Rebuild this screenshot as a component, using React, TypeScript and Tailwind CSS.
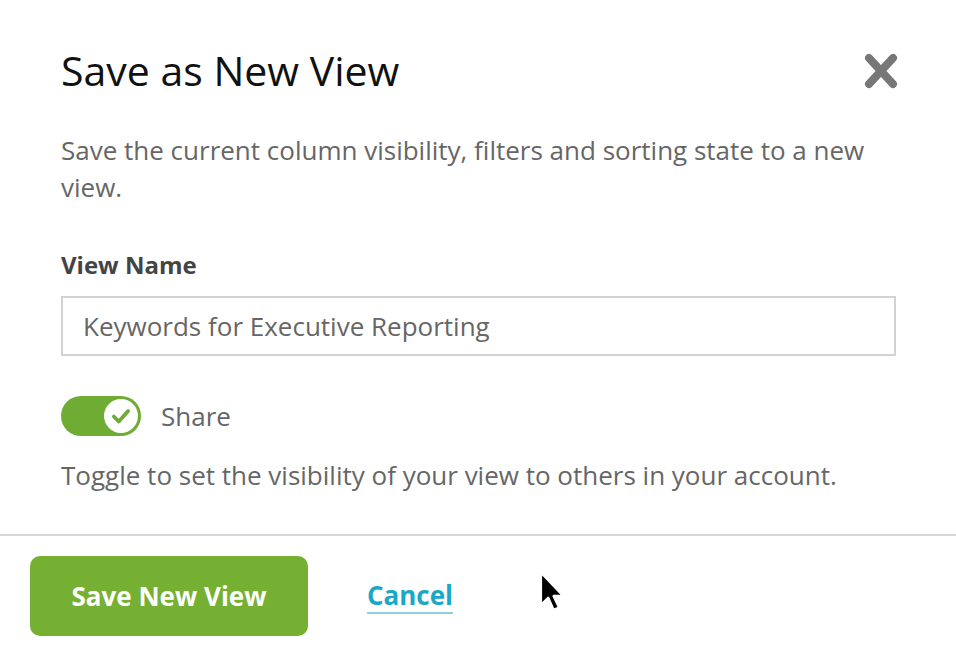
import React, { useState } from "react";

const App: React.FC = () => {
  const [viewName, setViewName] = useState("Keywords for Executive Reporting");
  const [shared, setShared] = useState(true);

  return (
    <div className="relative w-[956px] h-[656px] bg-white font-['Open_Sans',sans-serif] overflow-hidden">
      <div className="pl-[61px] pr-[60px] pt-[46px]">
        <div className="flex items-center justify-between">
          <h2 className="text-[41px] leading-[48px] font-medium text-[#111]">Save as New View</h2>
          <button aria-label="Close" className="mr-[-2px] mt-[2px]">
            <svg width="34" height="36" viewBox="0 0 34 36">
              <path
                d="M5 5 L29 31 M29 5 L5 31"
                stroke="#777"
                strokeWidth="8"
                strokeLinecap="round"
              />
            </svg>
          </button>
        </div>

        <p className="mt-[38px] text-[26px] leading-[37px] text-[#666]">
          Save the current column visibility, filters and sorting state to a new view.
        </p>

        {/* name field */}
        <label htmlFor="viewName" className="block mt-[43px] text-[24px] leading-[32px] font-bold text-[#444]">
          View Name
        </label>
        <input
          id="viewName"
          value={viewName}
          onChange={(e) => setViewName(e.target.value)}
          className="mt-[15px] w-full h-[60px] border-2 border-[#d2d2d2] px-[20px] text-[26px] text-[#666] outline-none"
        />

        {/* share toggle */}
        <div className="mt-[40px] flex items-center gap-[20px]">
          <button
            onClick={() => setShared(!shared)}
            className={`relative w-[80px] h-[40px] rounded-full ${shared ? "bg-[#6fac33]" : "bg-[#ccc]"}`}
          >
            <span
              className={`absolute top-[3px] w-[34px] h-[34px] rounded-full bg-white flex items-center justify-center ${
                shared ? "right-[3px]" : "left-[3px]"
              }`}
            >
              {shared && (
                <svg width="22" height="22" viewBox="0 0 20 20">
                  <path
                    d="M3.5 10.5 L8 15 L16.5 5.5"
                    fill="none"
                    stroke="#6fac33"
                    strokeWidth="3.4"
                    strokeLinecap="round"
                    strokeLinejoin="round"
                  />
                </svg>
              )}
            </span>
          </button>
          <span className="text-[26px] text-[#666]">Share</span>
        </div>
        <p className="mt-[21px] text-[26px] leading-[37px] text-[#666]">
          Toggle to set the visibility of your view to others in your account.
        </p>
      </div>

      <div className="mt-[40px] border-t-2 border-[#d6d6d6]" />

      <div className="flex items-center px-[30px] pt-[20px]">
        <button className="w-[278px] h-[80px] rounded-[10px] bg-[#75b032] text-white text-[26px] font-bold">
          Save New View
        </button>
        <a
          href="#"
          className="ml-[59px] text-[26px] font-bold text-[#1aa8c8] border-b-2 border-[#8fd0e0] leading-[34px]"
        >
          Cancel
        </a>
      </div>

      {/* mouse cursor */}
      <svg className="absolute left-[537px] top-[570px]" width="32" height="46" viewBox="0 0 26 38">
        <path d="M3 2 L3 29 L9 23 L13.5 33 L18 31 L13.5 21.5 L21.5 21.5 Z" fill="#000" stroke="#fff" strokeWidth="2" strokeLinejoin="round" />
      </svg>
    </div>
  );
};

export default App;
